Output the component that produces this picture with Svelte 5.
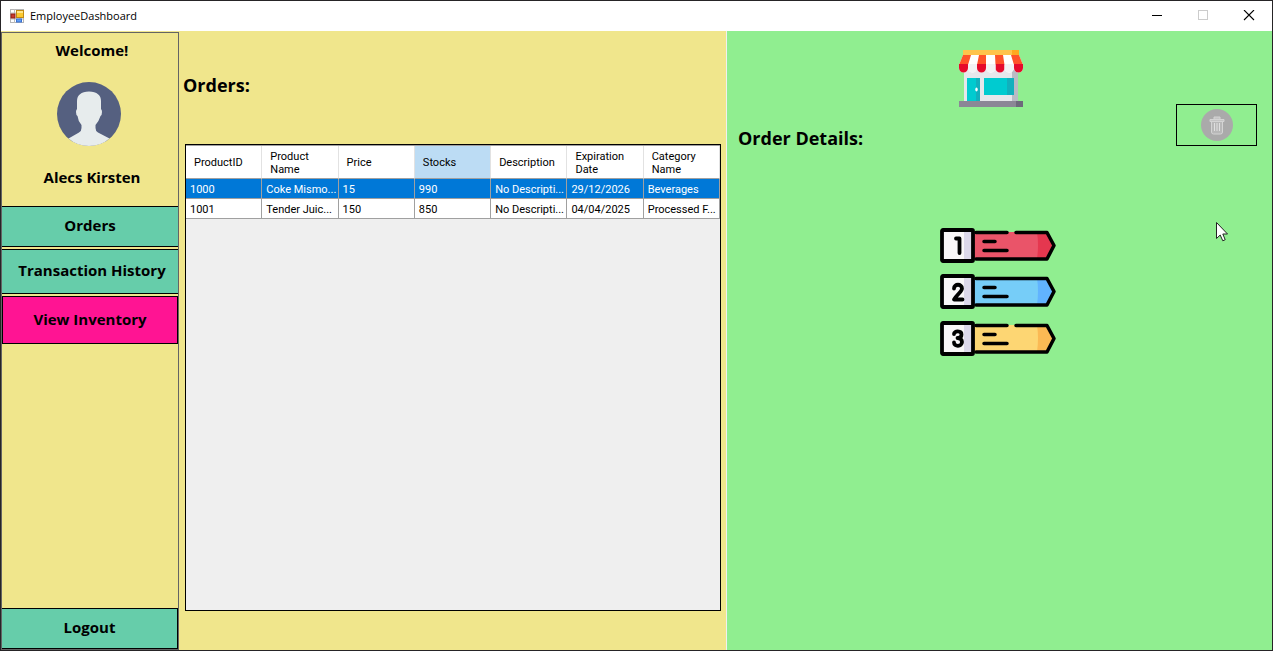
<script>
  const columns = ['ProductID', 'Product Name', 'Price', 'Stocks', 'Description', 'Expiration Date', 'Category Name'];
  const rows = [
    ['1000', 'Coke Mismo...', '15', '990', 'No Descripti...', '29/12/2026', 'Beverages'],
    ['1001', 'Tender Juic...', '150', '850', 'No Descripti...', '04/04/2025', 'Processed F...']
  ];
  let selected = $state(0);
  const tags = [
    { y: 0, n: 'M16 10.500h3.500V25', fill: '#ea5469', tip: '#e5374f', gap: true },
    { y: 46, n: 'M14 14.500c0-5 8-5 8 0c0 3-4 5-8 11h8.500', fill: '#76cdf8', tip: '#61b3ff', gap: false },
    { y: 93, n: 'M14 13c0-3.500 7.500-3.500 7.500 0.500c0 2.500-2 3.500-4 3.500c2.500 0 4.500 1.500 4.500 4c0 5-8 5-8 0.500', fill: '#fdd673', tip: '#fbb954', gap: true }
  ];
</script>

<div class="window">
  <header class="titlebar">
    <svg class="app-icon" width="15" height="15" viewBox="0 0 15 15" aria-hidden="true">
      <rect x="0.5" y="0.5" width="13" height="13" fill="#fff" stroke="#b5b5b5" />
      <path d="M4.5 0v14M0 4h6M0 10h14M10 9v5" stroke="#bcbcbc" />
      <rect x="1" y="5" width="4" height="4" fill="#c8392b" stroke="#8f2016" />
      <rect x="6.500" y="1.500" width="7" height="7" fill="#fbc92f" stroke="#c18a14" />
      <path d="M7 2h6v2H7z" fill="#ffe68a" />
      <rect x="6.500" y="10" width="5" height="3" fill="#5f9df5" stroke="#3a70cf" />
    </svg>
    <h1>EmployeeDashboard</h1>
    <div class="controls">
      <button aria-label="Minimize"><svg width="12" height="12" viewBox="0 0 12 12"><path d="M1 5.500h10" stroke="#000" /></svg></button>
      <button aria-label="Maximize" disabled><svg width="12" height="12" viewBox="0 0 12 12"><rect x="1.500" y="0.500" width="9" height="9" fill="none" stroke="#ccc" /></svg></button>
      <button aria-label="Close"><svg width="12" height="12" viewBox="0 0 12 12"><path d="M1 0l10 10M11 0L1 10" stroke="#000" stroke-width="1.100" /></svg></button>
    </div>
  </header>

  <div class="body">
    <nav class="sidebar">
      <div class="profile">
        <p>Welcome!</p>
        <svg width="64" height="64" viewBox="0 0 64 64" aria-hidden="true">
          <circle cx="32" cy="32" r="32" fill="#556080" />
          <path d="M11.500 56.500L22 50.500Q24.500 49 24.500 46V43Q21 39 20.500 34Q19 33 19 30Q19 28 20 27V19Q20 10 32 9.500Q44 10 44 19V27Q45 28 45 30Q45 33 43.500 34Q42 39 38.500 43V46Q38.500 49 41 50.500L52.500 56.500Q44 64 32 64Q20 64 11.500 56.500Z" fill="#e7eced" />
        </svg>
        <p>Alecs Kirsten</p>
      </div>
      <button class="nav orders">Orders</button>
      <button class="nav history">Transaction History</button>
      <button class="nav inventory">View Inventory</button>
      <button class="nav logout">Logout</button>
    </nav>

    <main class="orders-panel">
      <h2>Orders:</h2>
      <div class="grid">
        <table>
          <thead>
            <tr>
              {#each columns as column}
                <th scope="col" class:active={column === 'Stocks'}>{column}</th>
              {/each}
            </tr>
          </thead>
          <tbody>
            {#each rows as row, i}
              <tr class:selected={selected === i} onclick={() => (selected = i)}>
                {#each row as cell}<td>{cell}</td>{/each}
              </tr>
            {/each}
          </tbody>
        </table>
      </div>
    </main>

    <section class="details">
      <svg class="store" width="64" height="58" viewBox="0 0 64 58" aria-hidden="true">
        <path d="M5 15h54v37H5z" fill="#e6e7eb" />
        <path d="M53 18h6v34h-6z" fill="#b9bbc4" />
        <path d="M4 1h56v7H4z" fill="#ffc34c" />
        <path d="M53 1h7v7h-7z" fill="#ffa81f" />
        <path d="M4 6H60L64 16v3a4.500 4.500 0 0 1-9 0a4.500 4.500 0 0 1-9.500 0a4.500 4.500 0 0 1-9 0a4.500 4.500 0 0 1-9.500 0a4.500 4.500 0 0 1-9 0a4.500 4.500 0 0 1-9 0a4.500 4.500 0 0 1-9 0v-3z" fill="#fff" />
        <path d="M4 6h8L9 16H0zM20 6h7v10h-9zM36 6h8l1.500 10h-9zM52 6h8l4 10h-9z" fill="#ff5229" />
        <path d="M0 15h9v4a4.500 4.500 0 0 1-9 0zM18 15h9v4a4.500 4.500 0 0 1-9 0zM36.500 15h9v4a4.500 4.500 0 0 1-9 0zM55 15h9v4a4.500 4.500 0 0 1-9 0z" fill="#e6092c" />
        <path d="M9 15h9v4a4.500 4.500 0 0 1-9 0zM27 15h9.500v4a4.700 4.500 0 0 1-9.500 0zM45.500 15h9.500v4a4.700 4.500 0 0 1-9.500 0z" fill="#f2f2f4" />
        <path d="M8 29h9v24H8zM25 29h23v17H25z" fill="#00cbd0" />
        <path d="M17 29h4v24h-4zM48 29h7v17h-7z" fill="#11b0bd" />
        <ellipse cx="17.500" cy="40.500" rx="1.200" ry="2" fill="#fff" />
        <path d="M0 52h64v6H0z" fill="#8b8796" />
        <path d="M57 52h7v6h-7z" fill="#6d6a7b" />
      </svg>
      <div class="details-head">
        <h2>Order Details:</h2>
        <button class="trash" aria-label="Delete order" disabled>
          <svg width="32" height="32" viewBox="0 0 32 32">
            <circle cx="16" cy="16" r="16" fill="#aaa" />
            <path d="M10.500 12h11v11a2 2 0 0 1-2 2h-7a2 2 0 0 1-2-2z" fill="#b8b8b8" stroke="#d4d4d4" />
            <path d="M9 10.500h14v2H9zM13 10V8h6v2" fill="#c4c4c4" stroke="#d4d4d4" />
            <path d="M13.500 14v8M16 14v8M18.500 14v8" stroke="#e0e0e0" />
          </svg>
        </button>
      </div>
      <svg class="tags" width="116" height="129" viewBox="0 0 116 129" fill="none" stroke-linecap="round" stroke-linejoin="round" aria-hidden="true">
        {#each tags as tag}
          <g transform="translate(0 {tag.y})">
            <path d="M34 4H107L114 17.500L107 31H34z" fill={tag.fill} />
            <path d="M97 4H107L114 17.500L107 31H97Q99 17 97 4z" fill={tag.tip} />
            <path d={tag.gap ? 'M36 4.500H67M76 4.500H107L114 17.500L107 31H36' : 'M36 4.500H107L114 17.500L107 31H36'} stroke="#000" stroke-width="3.500" />
            <rect x="2" y="2" width="31" height="31" rx="1" fill="#f9f7f8" />
            <path d="M24 3h8v29h-8z" fill="#dcd8ea" />
            <rect x="2" y="2" width="31" height="31" rx="1" stroke="#000" stroke-width="3.800" />
            <path d="M44 13.500H55M44 22.500H67" stroke="#000" stroke-width="3.500" />
            <path d={tag.n} stroke="#000" stroke-width="3.800" />
          </g>
        {/each}
      </svg>
    </section>
  </div>

  <svg class="cursor" width="12" height="20" viewBox="0 0 12 20" aria-hidden="true">
    <path d="M0.500 0.500V16.500L4.200 13L6.800 18.800L9.200 17.700L6.800 12H11.500Z" fill="#fff" stroke="#222" />
  </svg>
</div>

<style>
  :global(body) { margin: 0; }
  .window {
    box-sizing: border-box;
    position: relative;
    display: flex;
    flex-direction: column;
    min-height: 100vh;
    border: 1px solid #262426;
    font-family: "Open Sans", "Noto Sans", sans-serif;
    color: #000;
  }
  h1, h2, p { margin: 0; }
  button { margin: 0; padding: 0; font: inherit; color: inherit; }
  .titlebar { display: flex; align-items: center; height: 30px; padding-left: 9px; background: #fff; }
  .app-icon { flex: none; }
  h1 { margin-left: 5px; padding-bottom: 2px; font-size: 11px; font-weight: 400; }
  .controls { display: flex; margin-left: auto; }
  .controls button { display: grid; place-items: center; width: 46px; height: 30px; border: 0; background: none; }
  .body { display: grid; flex: 1; grid-template-columns: 178px minmax(0, 548fr) minmax(0, 545fr); background: #f0e68c; }
  .sidebar {
    display: flex;
    flex-direction: column;
    margin-top: 1px;
    border: 1px solid #646464;
    font-size: 15px;
    font-weight: 700;
  }
  .profile {
    box-sizing: border-box;
    display: flex;
    flex-direction: column;
    align-items: center;
    justify-content: space-between;
    height: 173px;
    padding: 7px 0 19px 4px;
    line-height: 20px;
  }
  .profile svg { margin-right: 6px; }
  .nav { box-sizing: border-box; padding-bottom: 4px; border: 1px solid #000; border-width: 1px 0; background: #66cdaa; }
  .orders { height: 41px; margin-bottom: 2px; }
  .history { height: 45px; margin-bottom: 2px; padding-left: 4px; }
  .inventory { height: 48px; padding-bottom: 2px; border-width: 1px; background: #ff1493; }
  .logout { height: 41px; margin-top: auto; border-right-width: 1px; }
  h2 { font-size: 18px; line-height: 24px; font-weight: 700; }
  .orders-panel {
    display: flex;
    flex-direction: column;
    padding: 42px 5px 39px 6px;
    border-right: 1px solid #f0f0f0;
  }
  .orders-panel h2 { margin: 0 0 47px -2px; }
  .grid { flex: 1; border: 1px solid #000; background: #efefef; }
  table { width: 100%; table-layout: fixed; border-collapse: separate; border-spacing: 0; border-top: 1px solid #a0a0a0; font: 11px/13px "Roboto", sans-serif; }
  th { height: 31px; padding: 1px 0 0 8px; border-right: 1px solid #e2e2e2; border-bottom: 1px solid #a0a0a0; background: #fff; font-weight: 400; text-align: left; }
  th.active { background: #bcdcf4; }
  td { height: 18px; padding: 1px 0 0 4px; border-right: 1px solid #a0a0a0; border-bottom: 1px solid #a0a0a0; background: #fff; white-space: nowrap; overflow: hidden; }
  .selected td { background: #0078d7; color: #fff; }
  .details {
    display: flex;
    flex-direction: column;
    align-items: center;
    padding-top: 18px;
    background: #90ee90;
  }
  .store { margin-right: 18px; }
  .details-head { box-sizing: border-box; display: flex; justify-content: space-between; align-items: flex-end; width: 100%; height: 44px; margin-top: -1px; padding: 0 15px 0 11px; }
  .trash { display: grid; place-items: center; width: 81px; height: 42px; margin-bottom: 4px; border: 1px solid #000; background: none; }
  .tags { margin: 78px 4px 0 0; }
  .cursor { position: absolute; left: 1215px; top: 221px; }
</style>
